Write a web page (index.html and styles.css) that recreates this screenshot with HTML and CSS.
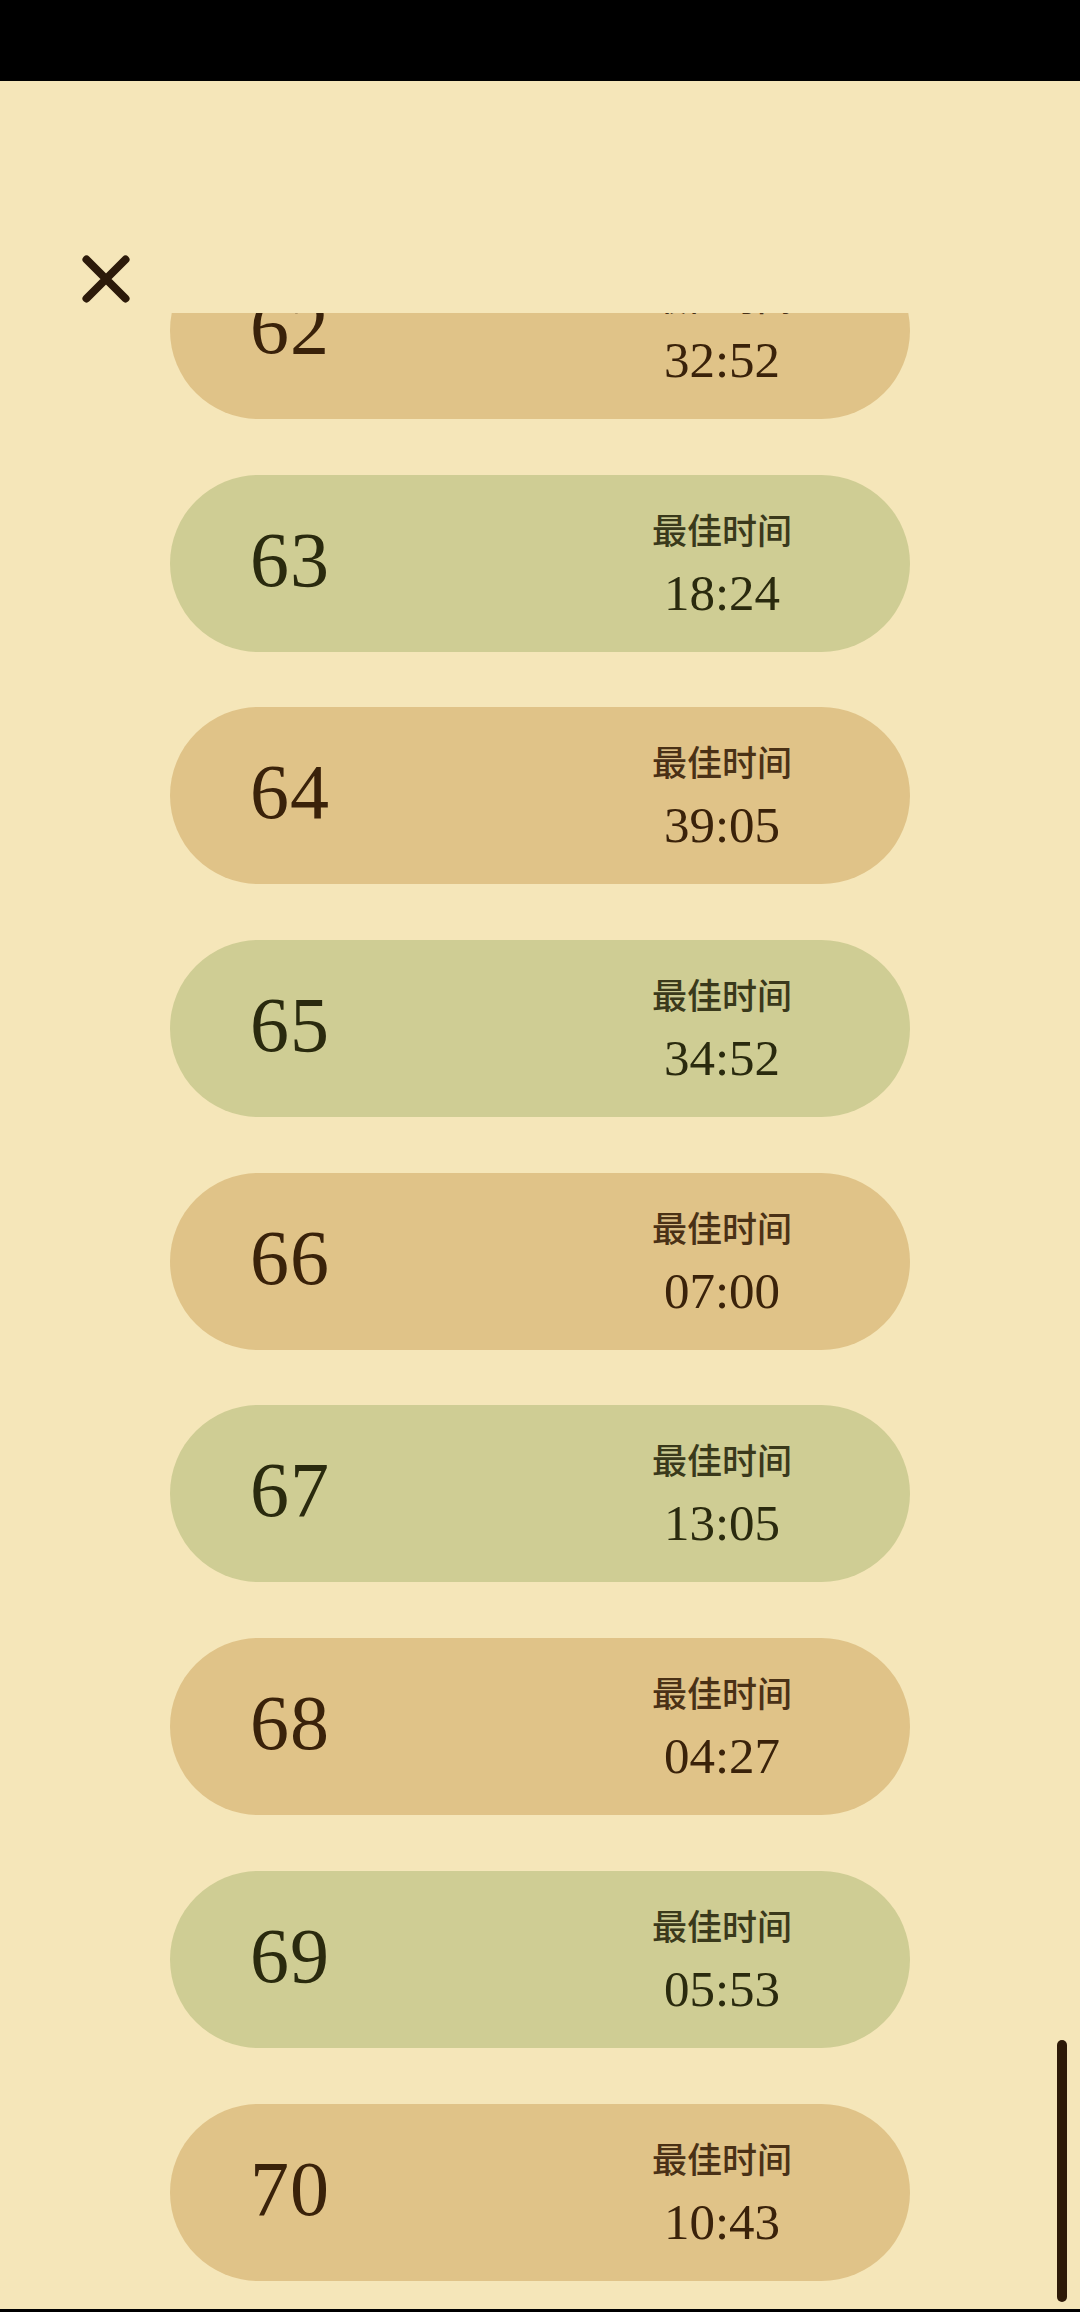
FILE: index.html
```html
<!DOCTYPE html>
<html lang="zh">
<head>
<meta charset="utf-8">
<title>最佳时间</title>
<link rel="stylesheet" href="styles.css">
</head>
<body>
<div class="screen">
  <div class="status-bar"></div>
  <header class="header">
    <button class="close" aria-label="关闭">
      <svg width="48" height="48" viewBox="0 0 48 48"><path d="M4.5 4.5 L43.5 43.5 M43.5 4.5 L4.5 43.5" stroke="#2c1a0a" stroke-width="8" stroke-linecap="round" fill="none"/></svg>
    </button>
  </header>
  <main class="list-viewport">
    <ul class="list">
      <li class="pill tan"><span class="num">62</span><div class="best"><span class="label">最佳时间</span><span class="time">32:52</span></div></li>
      <li class="pill green"><span class="num">63</span><div class="best"><span class="label">最佳时间</span><span class="time">18:24</span></div></li>
      <li class="pill tan"><span class="num">64</span><div class="best"><span class="label">最佳时间</span><span class="time">39:05</span></div></li>
      <li class="pill green"><span class="num">65</span><div class="best"><span class="label">最佳时间</span><span class="time">34:52</span></div></li>
      <li class="pill tan"><span class="num">66</span><div class="best"><span class="label">最佳时间</span><span class="time">07:00</span></div></li>
      <li class="pill green"><span class="num">67</span><div class="best"><span class="label">最佳时间</span><span class="time">13:05</span></div></li>
      <li class="pill tan"><span class="num">68</span><div class="best"><span class="label">最佳时间</span><span class="time">04:27</span></div></li>
      <li class="pill green"><span class="num">69</span><div class="best"><span class="label">最佳时间</span><span class="time">05:53</span></div></li>
      <li class="pill tan"><span class="num">70</span><div class="best"><span class="label">最佳时间</span><span class="time">10:43</span></div></li>
    </ul>
    <div class="scrollbar"></div>
  </main>
  <div class="bottom-edge"></div>
</div>
</body>
</html>
```
FILE: styles.css
```css
html, body {
  margin: 0;
  padding: 0;
  background: #f5e6b9;
}
.screen {
  width: 1080px;
  height: 2312px;
  display: flex;
  flex-direction: column;
  background: #f5e6b9;
  overflow: hidden;
}
.status-bar {
  height: 81px;
  background: #000;
  flex: none;
}
.header {
  height: 232px;
  flex: none;
  box-sizing: border-box;
  padding: 174px 0 0 82px;
}
.close {
  display: block;
  width: 48px;
  height: 48px;
  padding: 0;
  border: 0;
  background: none;
}
.close svg { display: block; }
.list-viewport {
  position: relative;
  height: 1996px;
  flex: none;
  overflow: hidden;
}
.list {
  list-style: none;
  margin: -71px 0 0 0;
  padding: 0;
  display: flex;
  flex-direction: column;
  gap: 55.7px;
}
.pill {
  margin-left: 170px;
  width: 740px;
  height: 177px;
  border-radius: 88.5px;
  box-sizing: border-box;
  padding: 0 88px 0 80px;
  display: flex;
  align-items: center;
  justify-content: space-between;
}
.pill.tan { background: #e0c388; color: #3a220a; }
.pill.green { background: #cfcd94; color: #2a2a0e; }
.num {
  font-family: "Liberation Serif", "DejaVu Serif", serif;
  font-size: 78px;
  line-height: 78px;
  margin-bottom: 7px;
  letter-spacing: 1px;
}
.best {
  width: 200px;
  display: flex;
  flex-direction: column;
  align-items: center;
  gap: 18px;
}
.label {
  font-family: "Noto Sans CJK SC", "Noto Sans", sans-serif;
  font-size: 35px;
  font-weight: 500;
  line-height: 42px;
  opacity: 0.9;
}
.time {
  font-family: "Liberation Serif", "DejaVu Serif", serif;
  font-size: 51px;
  line-height: 51px;
}
.scrollbar {
  position: absolute;
  left: 1057px;
  top: 1727px;
  width: 10px;
  height: 262px;
  border-radius: 5px;
  background: #2e1a08;
}
.bottom-edge {
  height: 3px;
  background: #000;
  flex: none;
}
```
